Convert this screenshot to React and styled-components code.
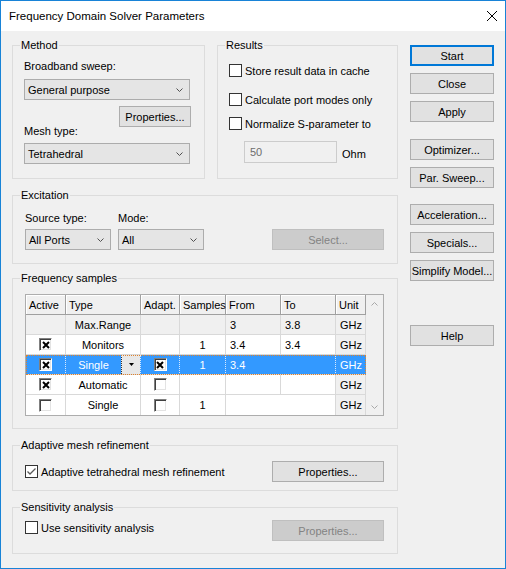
import React from 'react'
import styled, { createGlobalStyle } from 'styled-components'

const GlobalStyle = createGlobalStyle`
  * { box-sizing: border-box; }
  html, body { margin: 0; padding: 0; background: #ffffff; }
  body {
    font-family: "Liberation Sans", Arial, sans-serif;
    font-size: 11px;
    color: #000;
  }
`

const Chevron = ({ up, color = '#505050' }) => (
  <svg width="7" height="4" viewBox="0 0 7 4">
    <path d={up ? 'M0.5 3.5 L3.5 0.5 L6.5 3.5' : 'M0.5 0.5 L3.5 3.5 L6.5 0.5'} fill="none" stroke={color} strokeWidth="1" />
  </svg>
)

const Combo = ({ value, $w, $mt }) => (
  <ComboBox $w={$w} $mt={$mt}>
    <span>{value}</span>
    <Chevron />
  </ComboBox>
)

const Check = ({ checked }) => (
  <CheckBox>
    {checked && (
      <svg width="11" height="11" viewBox="0 0 11 11">
        <path d="M1.5 5.5 L4 8 L9.5 2.5" fill="none" stroke="#5a5a5a" strokeWidth="1.3" />
      </svg>
    )}
  </CheckBox>
)

const XBox = ({ checked }) => (
  <OldBox>
    {checked && (
      <svg width="8" height="8" viewBox="0 0 8 8">
        <path d="M1 1 L7 7 M7 1 L1 7" stroke="#000" strokeWidth="2" />
      </svg>
    )}
  </OldBox>
)

const cols = [40, 75, 39, 46, 55, 55, 30]

function App() {
  return (
    <>
      <GlobalStyle />
      <Window>
        <TitleBar>
          <Title>Frequency Domain Solver Parameters</Title>
          <svg width="10" height="10" viewBox="0 0 10 10">
            <path d="M0 0 L10 10 M10 0 L0 10" stroke="#000" strokeWidth="1" />
          </svg>
        </TitleBar>
        <Body>
          <LeftCol>
            <TopRow>
              <Group $w={193} $h={134} $pl={11} $pr={13}>
                <Legend>Method</Legend>
                <Label $mt={8}>Broadband sweep:</Label>
                <Combo $w={166} $mt={6} value="General purpose" />
                <Button $w={72} $mt={6} $self="flex-end">Properties...</Button>
                <Label $mt={-2}>Mesh type:</Label>
                <Combo $w={166} $mt={5} value="Tetrahedral" />
              </Group>
              <Group $w={181} $h={134} $pl={11}>
                <Legend>Results</Legend>
                <CheckRow $mt={12}><Check />Store result data in cache</CheckRow>
                <CheckRow $mt={16}><Check />Calculate port modes only</CheckRow>
                <CheckRow $mt={11}><Check />Normalize S-parameter to</CheckRow>
                <InputRow>
                  <TextInput>50</TextInput>
                  <UnitLabel>Ohm</UnitLabel>
                </InputRow>
              </Group>
            </TopRow>

            <Group $h={69} $pl={12} $pr={13} $mt={16}>
              <Legend>Excitation</Legend>
              <ExcRow>
                <Field>
                  <Label>Source type:</Label>
                  <Combo $w={86} $mt={4} value="All Ports" />
                </Field>
                <Field>
                  <Label>Mode:</Label>
                  <Combo $w={86} $mt={4} value="All" />
                </Field>
                <Button $w={112} $disabled $ml="auto">Select...</Button>
              </ExcRow>
            </Group>

            <Group $h={151} $pl={12} $mt={14}>
              <Legend>Frequency samples</Legend>
              <GridFrame>
                <Table>
                  <colgroup>
                    {cols.map((w, i) => <Col key={i} $w={w} />)}
                  </colgroup>
                  <thead>
                    <tr>
                      <Th>Active</Th>
                      <Th>Type</Th>
                      <Th>Adapt.</Th>
                      <Th>Samples</Th>
                      <Th>From</Th>
                      <Th>To</Th>
                      <Th>Unit</Th>
                    </tr>
                  </thead>
                  <tbody>
                    <Tr>
                      <Td $gray />
                      <Td $gray $center>Max.Range</Td>
                      <Td $gray />
                      <Td $gray />
                      <Td $gray>3</Td>
                      <Td $gray>3.8</Td>
                      <Td $gray>GHz</Td>
                    </Tr>
                    <Tr>
                      <Td $center><XBox checked /></Td>
                      <Td $center>Monitors</Td>
                      <Td />
                      <Td $center>1</Td>
                      <Td>3.4</Td>
                      <Td>3.4</Td>
                      <Td $gray>GHz</Td>
                    </Tr>
                    <Tr $sel>
                      <Td $sel $center><XBox checked /></Td>
                      <Td $sel $flush>
                        <TypeInner>
                          <TypeText>Single</TypeText>
                          <DropBtn>
                            <svg width="5" height="3" viewBox="0 0 5 3"><path d="M0 0 H5 L2.5 3 Z" fill="#000" /></svg>
                          </DropBtn>
                        </TypeInner>
                      </Td>
                      <Td $sel $center><XBox checked /></Td>
                      <Td $sel $center>1</Td>
                      <Td $sel colSpan={2}>3.4</Td>
                      <Td $sel>GHz</Td>
                    </Tr>
                    <Tr>
                      <Td $center><XBox checked /></Td>
                      <Td $center>Automatic</Td>
                      <Td $center><XBox /></Td>
                      <Td />
                      <Td />
                      <Td />
                      <Td $gray>GHz</Td>
                    </Tr>
                    <Tr $last>
                      <Td $center><XBox /></Td>
                      <Td $center>Single</Td>
                      <Td $center><XBox /></Td>
                      <Td $center>1</Td>
                      <Td colSpan={2} />
                      <Td $gray>GHz</Td>
                    </Tr>
                  </tbody>
                </Table>
                <ScrollBar>
                  <ScrollArrow><Chevron up color="#a8a8a8" /></ScrollArrow>
                  <ScrollArrow><Chevron color="#a8a8a8" /></ScrollArrow>
                </ScrollBar>
              </GridFrame>
            </Group>

            <Group $h={46} $pl={12} $pr={13} $mt={16}>
              <Legend>Adaptive mesh refinement</Legend>
              <OptionRow $mt={9}>
                <CheckRow><Check checked />Adaptive tetrahedral mesh refinement</CheckRow>
                <Button $w={112}>Properties...</Button>
              </OptionRow>
            </Group>

            <Group $h={47} $pl={12} $pr={13} $mt={16}>
              <Legend>Sensitivity analysis</Legend>
              <OptionRow $mt={6} $align="flex-start">
                <CheckRow $mt={1}><Check />Use sensitivity analysis</CheckRow>
                <Button $w={112} $disabled>Properties...</Button>
              </OptionRow>
            </Group>
          </LeftCol>

          <RightCol>
            <Button $default>Start</Button>
            <Button $mt={7}>Close</Button>
            <Button $mt={7}>Apply</Button>
            <Button $mt={17}>Optimizer...</Button>
            <Button $mt={7}>Par. Sweep...</Button>
            <Button $mt={16}>Acceleration...</Button>
            <Button $mt={7}>Specials...</Button>
            <Button $mt={7}>Simplify Model...</Button>
            <Button $mt={44}>Help</Button>
          </RightCol>
        </Body>
      </Window>
    </>
  )
}

export default App

const Window = styled.div`
  width: 506px;
  height: 569px;
  border: 1px solid #1883d7;
  background: #f0f0f0;
  display: flex;
  flex-direction: column;
`
const TitleBar = styled.div`
  height: 30px;
  flex-shrink: 0;
  background: #fff;
  display: flex;
  align-items: center;
  justify-content: space-between;
  padding: 0 8px 0 8px;
`
const Title = styled.div`
  font-size: 11.5px;
  color: #000;
`
const Body = styled.div`
  display: flex;
  padding: 14px 10px 0 11px;
  gap: 12px;
`
const LeftCol = styled.div`
  width: 386px;
  display: flex;
  flex-direction: column;
`
const TopRow = styled.div`
  display: flex;
  gap: 12px;
`
const RightCol = styled.div`
  width: 84px;
  display: flex;
  flex-direction: column;
`
const Group = styled.div`
  --pl: ${p => p.$pl || 0}px;
  width: ${p => (p.$w ? `${p.$w}px` : 'auto')};
  height: ${p => p.$h}px;
  margin-top: ${p => p.$mt || 0}px;
  border: 1px solid #dcdcdc;
  padding: 0 ${p => p.$pr || 0}px 0 ${p => p.$pl || 0}px;
  display: flex;
  flex-direction: column;
`
const Legend = styled.div`
  margin: -7px 0 0 calc(7px - var(--pl));
  padding: 0 1px;
  width: fit-content;
  line-height: 13px;
  background: #f0f0f0;
`
const Label = styled.div`
  line-height: 13px;
  margin-top: ${p => p.$mt || 0}px;
`
const ComboBox = styled.div`
  width: ${p => p.$w}px;
  height: 21px;
  margin-top: ${p => p.$mt || 0}px;
  background: #e5e5e5;
  border: 1px solid #acacac;
  display: flex;
  align-items: center;
  justify-content: space-between;
  padding: 0 6px 0 3px;
`
const Button = styled.div`
  width: ${p => (p.$w ? `${p.$w}px` : '100%')};
  height: 21px;
  flex-shrink: 0;
  margin-top: ${p => p.$mt || 0}px;
  margin-left: ${p => p.$ml || 0};
  align-self: ${p => p.$self || 'auto'};
  display: flex;
  align-items: center;
  justify-content: center;
  background: ${p => (p.$disabled ? '#cccccc' : '#e1e1e1')};
  color: ${p => (p.$disabled ? '#838383' : '#000')};
  border: ${p => (p.$default ? '2px solid #0078d7' : p.$disabled ? '1px solid #bfbfbf' : '1px solid #adadad')};
`
const CheckRow = styled.div`
  display: flex;
  align-items: center;
  gap: 3px;
  height: 13px;
  margin-top: ${p => p.$mt || 0}px;
`
const CheckBox = styled.span`
  width: 13px;
  height: 13px;
  flex-shrink: 0;
  border: 1px solid #333;
  background: #fff;
  display: flex;
  align-items: center;
  justify-content: center;
`
const InputRow = styled.div`
  display: flex;
  align-items: center;
  gap: 5px;
  margin: 11px 0 0 15px;
`
const TextInput = styled.div`
  width: 93px;
  height: 22px;
  border: 1px solid #cccccc;
  background: #f0f0f0;
  color: #6d6d6d;
  padding-left: 5px;
  display: flex;
  align-items: center;
`
const UnitLabel = styled.span`
  padding-top: 3px;
`
const ExcRow = styled.div`
  display: flex;
  align-items: flex-end;
  gap: 7px;
  margin-top: 10px;
`
const Field = styled.div`
  display: flex;
  flex-direction: column;
`
const GridFrame = styled.div`
  display: flex;
  width: 359px;
  margin-top: 9px;
  border: 1px solid #adadad;
  background: #fff;
`
const Table = styled.table`
  width: 340px;
  table-layout: fixed;
  border-collapse: separate;
  border-spacing: 0;
`
const Col = styled.col`
  width: ${p => p.$w}px;
`
const Th = styled.th`
  height: 20px;
  padding: 0 3px;
  font-weight: normal;
  text-align: left;
  background: #f0f0f0;
  border-right: 1px solid #a0a0a0;
  border-bottom: 1px solid #a0a0a0;
  box-shadow: inset 1px 1px 0 #fff;
`
const Tr = styled.tr`
  height: 20px;
  outline: ${p => (p.$sel ? '1px dotted #e0822c' : 'none')};
  outline-offset: -1px;
  & > td { border-bottom: ${p => (p.$last ? 'none' : '1px solid #d9d9d9')}; }
`
const Td = styled.td`
  height: 20px;
  padding: ${p => (p.$flush ? '0' : '0 4px')};
  text-align: ${p => (p.$center ? 'center' : 'left')};
  vertical-align: middle;
  white-space: nowrap;
  background: ${p => (p.$sel ? '#3399ff' : p.$gray ? '#f0f0f0' : '#fff')};
  color: ${p => (p.$sel ? '#fff' : '#000')};
  border-right: 1px ${p => (p.$sel ? 'dotted #d6e9ff' : 'solid #d9d9d9')};
`
const TypeInner = styled.div`
  display: flex;
  align-items: center;
  height: 19px;
`
const TypeText = styled.span`
  flex: 1;
  text-align: center;
`
const DropBtn = styled.span`
  width: 19px;
  height: 19px;
  flex-shrink: 0;
  background: #e8e8e8;
  border-left: 1px dotted #333;
  display: flex;
  align-items: center;
  justify-content: center;
`
const OldBox = styled.span`
  display: inline-flex;
  align-items: center;
  justify-content: center;
  vertical-align: middle;
  width: 13px;
  height: 13px;
  background: #fff;
  border-style: solid;
  border-width: 1px;
  border-color: #808080 #ffffff #ffffff #808080;
  box-shadow: inset 1px 1px 0 #404040, inset -1px -1px 0 #e3e3e3;
`
const ScrollBar = styled.div`
  width: 17px;
  background: #f0f0f0;
  display: flex;
  flex-direction: column;
  justify-content: space-between;
`
const ScrollArrow = styled.div`
  height: 17px;
  display: flex;
  align-items: center;
  justify-content: center;
`
const OptionRow = styled.div`
  display: flex;
  align-items: ${p => p.$align || 'center'};
  justify-content: space-between;
  margin-top: ${p => p.$mt || 0}px;
`
